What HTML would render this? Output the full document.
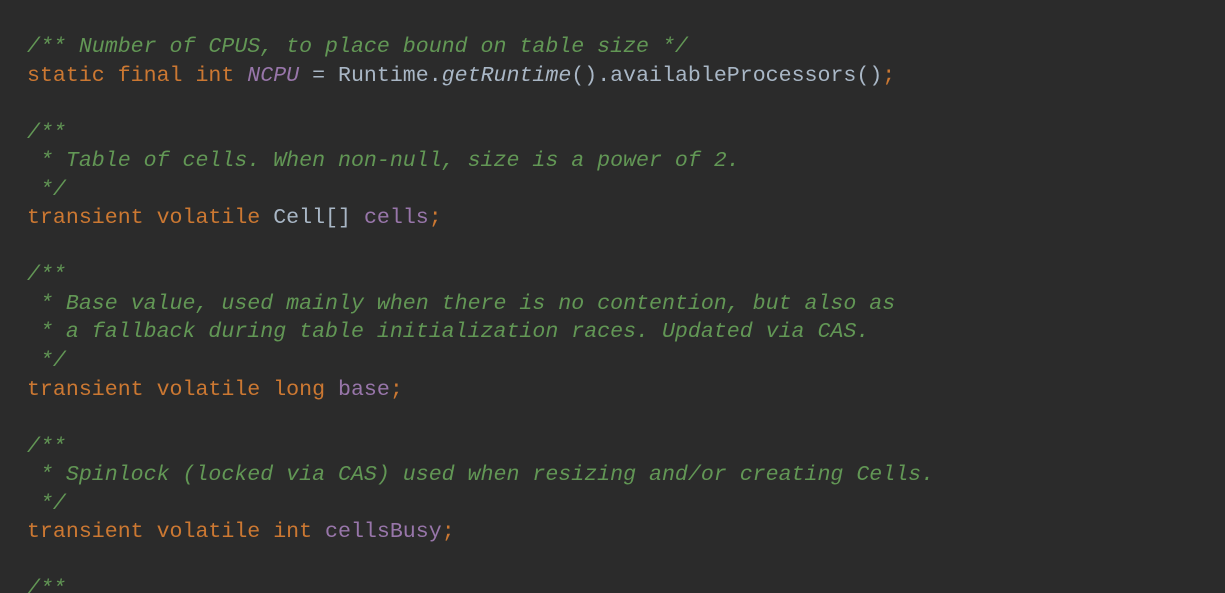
<!DOCTYPE html>
<html><head><style>
html,body{margin:0;padding:0;background:#2b2b2b;width:1225px;height:593px;overflow:hidden}
pre{margin:0;padding:33px 0 0 27px;font-family:"Liberation Mono",monospace;font-size:21.6px;line-height:28.55px;color:#a9b7c6}
.c{color:#629755;font-style:italic}.k{color:#cc7832}.f{color:#9876aa}.i{font-style:italic}
</style></head><body><pre><span class="c">/** Number of CPUS, to place bound on table size */</span>
<span class="k">static final int </span><span class="f i">NCPU</span> = Runtime.<span class="i">getRuntime</span>().availableProcessors()<span class="k">;</span>

<span class="c">/**
 * Table of cells. When non-null, size is a power of 2.
 */</span>
<span class="k">transient volatile </span>Cell[] <span class="f">cells</span><span class="k">;</span>

<span class="c">/**
 * Base value, used mainly when there is no contention, but also as
 * a fallback during table initialization races. Updated via CAS.
 */</span>
<span class="k">transient volatile long </span><span class="f">base</span><span class="k">;</span>

<span class="c">/**
 * Spinlock (locked via CAS) used when resizing and/or creating Cells.
 */</span>
<span class="k">transient volatile int </span><span class="f">cellsBusy</span><span class="k">;</span>

<span class="c">/**</span></pre></body></html>
